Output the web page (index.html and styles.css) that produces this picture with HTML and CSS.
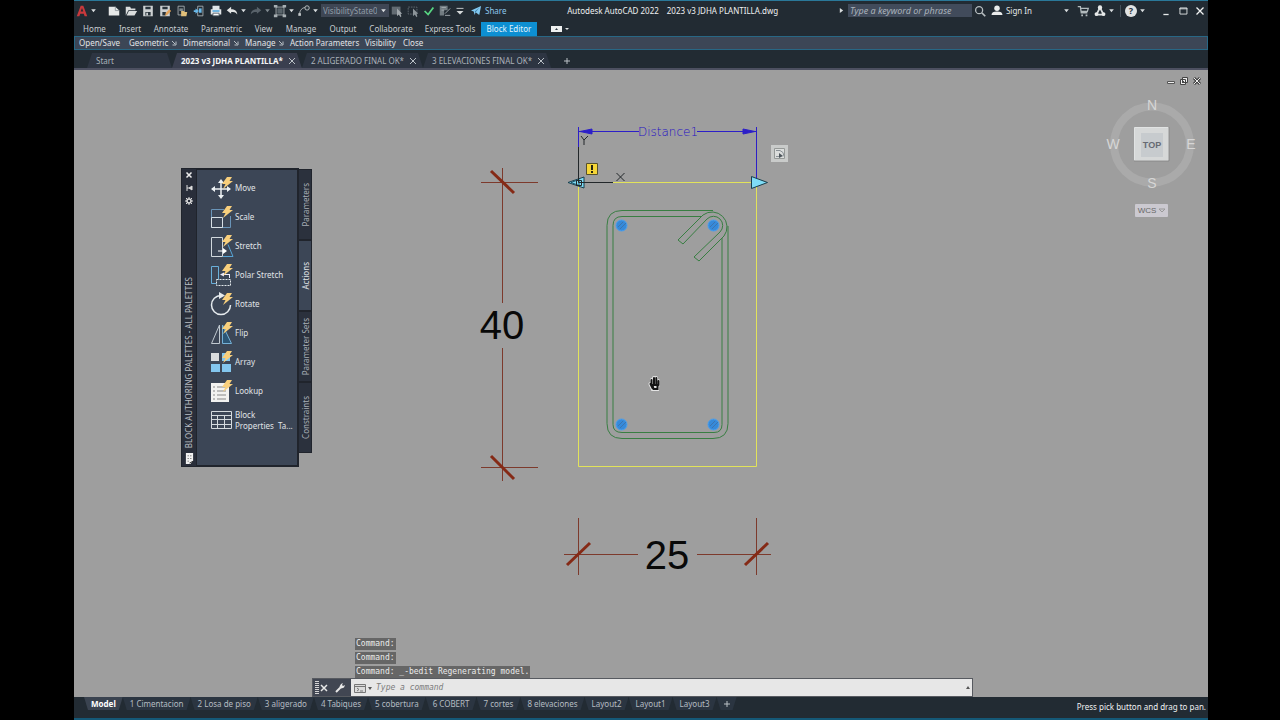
FILE: index.html
```html
<!DOCTYPE html>
<html lang="en">
<head>
<meta charset="utf-8">
<title>Autodesk AutoCAD 2022</title>
<link rel="stylesheet" href="styles.css">
</head>
<body>
<svg class="defs" width="0" height="0" aria-hidden="true">
  <symbol id="caret" viewBox="0 0 6 6"><path d="M1 2h4L3 4.500z" fill="currentColor"/></symbol>
  <symbol id="bolt" viewBox="0 0 12 12"><path d="M6 0h5L8.500 4H12L2 12l2.500-5H1z" fill="#f8cf7c"/></symbol>
  <symbol id="launch" viewBox="0 0 6 6"><path d="M1 1l3 3M5 1.500V5H1.500" fill="none" stroke="currentColor"/></symbol>
</svg>
<div class="app">
  <header class="titlebar">
    <div class="quick">
      <button class="tool" aria-label="Application menu"><svg viewBox="0 0 16 16"><path d="M2 14L6.500 2h3l4.500 12h-3l-1-3H6l-1 3zM6.500 8.500h3L8 4.500z" fill="#c9393c"/></svg></button>
      <svg class="caret after-logo"><use href="#caret"/></svg>
      <div class="file-tools">
        <button class="tool" aria-label="New"><svg viewBox="0 0 16 16"><path d="M2 3h7.500L14 7.500V13H2z" fill="#e6e8e8"/><path d="M9.500 3v4.500H14" fill="none" stroke="#8d959a"/></svg></button>
        <button class="tool" aria-label="Open"><svg viewBox="0 0 16 16"><path d="M2 13V3h5l1 2h5v2H5zM5.500 8H15l-3 5H3z" fill="#d9dcdd"/></svg></button>
        <button class="tool" aria-label="Save"><svg viewBox="0 0 16 16"><path d="M2.500 2h11v12h-11z" fill="#ccd0d2"/><path d="M5 3h6v3H5zM5 9h6v4H5z" fill="#29343c"/><path d="M6 10h2v3H6z" fill="#ccd0d2"/></svg></button>
        <button class="tool" aria-label="Save As"><svg viewBox="0 0 16 16"><path d="M2.500 2h11v12h-11z" fill="#ccd0d2"/><path d="M5 3h6v3H5zM5 9h4v4H5z" fill="#29343c"/><path d="M8 14l1-4 4-4 2 2-4 4z" fill="#e3a359"/></svg></button>
        <button class="tool" aria-label="Open from Web"><svg viewBox="0 0 16 16"><path d="M3.500 2.500h7v10h-7z" fill="none" stroke="#a8afb2"/><path d="M5 5h4v3H5z" fill="#7d888e"/><path d="M7 8h3l1 1h3l-1 5H7z" fill="#e0bf79"/></svg></button>
        <button class="tool" aria-label="Save to Web"><svg viewBox="0 0 16 16"><path d="M6.500 2.500h6v11h-6z" fill="none" stroke="#a8afb2"/><path d="M4 5l4 3-4 3V9H2V7h2z" fill="#69b9ea"/><path d="M8 5h3v5H8z" fill="#69b9ea"/></svg></button>
        <button class="tool" aria-label="Plot"><svg viewBox="0 0 16 16"><path d="M4 2h8v4H4zM2 6h12v6H2z" fill="#e1e5e7"/><path d="M4 7h8v2H4z" fill="#60afe0"/><path d="M4.500 10.500h7v3h-7z" fill="#fff" stroke="#56616a"/></svg></button>
      </div>
      <button class="tool" aria-label="Undo"><svg viewBox="0 0 16 16"><path d="M2 7l5-4v3c4 0 7 2 7 6-2-3-4-3-7-3v2z" fill="#e2e4e4"/></svg></button>
      <svg class="caret"><use href="#caret"/></svg>
      <button class="tool" aria-label="Redo"><svg viewBox="0 0 16 16"><path d="M14 7L9 3v3c-4 0-7 2-7 6 2-3 4-3 7-3v2z" fill="#58626a"/></svg></button>
      <svg class="caret dim"><use href="#caret"/></svg>
      <button class="tool" aria-label="Group"><svg viewBox="0 0 16 16"><path d="M3.500 3.500h9v9h-9z" fill="none" stroke="#aeb5b8"/><path d="M5 5h6v6H5z" fill="#59646b"/><path d="M1 1h4v3H1zM11 1h4v3h-4zM1 12h4v3H1zM11 12h4v3h-4z" fill="#a7afb3"/></svg></button>
      <svg class="caret"><use href="#caret"/></svg>
      <button class="tool" aria-label="Block action"><svg viewBox="0 0 16 16"><path d="M3 12c0-5 3-8 7-8" fill="none" stroke="#c5cacc"/><circle cx="11.500" cy="4.500" r="2.500" fill="#29343c" stroke="#c5cacc"/><path d="M1.500 10.500h3v3h-3z" fill="#c5cacc"/></svg></button>
      <svg class="caret"><use href="#caret"/></svg>
      <div class="state"><select aria-label="Visibility state"><option>VisibilityState0</option></select><svg class="caret"><use href="#caret"/></svg></div>
      <button class="tool" aria-label="Make visible"><svg viewBox="0 0 16 16"><path d="M2 3h10v9H2z" fill="#626b72"/><path d="M8 5v9l2-2 2 3 1-1-1-3h2z" fill="#a1a8ac"/></svg></button>
      <button class="tool" aria-label="Make invisible"><svg viewBox="0 0 16 16"><path d="M2.500 3.500h10v8h-10z" fill="none" stroke="#626b72" stroke-dasharray="2 1"/><path d="M8 5v9l2-2 2 3 1-1-1-3h2z" fill="#8c959a"/></svg></button>
      <button class="tool" aria-label="Test block"><svg viewBox="0 0 16 16"><path d="M3 8l4 4 6-8" fill="none" stroke="#58d783" stroke-width="2"/></svg></button>
      <button class="tool" aria-label="Edit attributes"><svg viewBox="0 0 16 16"><path d="M2 2h9v5H7v6H2z" fill="#727c82"/><path d="M4 4h5M4 7h3M8 13h6M8 11l6-6" stroke="#a5adb1"/></svg></button>
      <button class="tool more" aria-label="Customize"><svg viewBox="0 0 16 16"><path d="M4 5h8" stroke="#d5d9da"/><path d="M4 8h8l-4 4z" fill="#d5d9da"/></svg></button>
      <button class="share"><svg viewBox="0 0 12 12"><path d="M0 6L11 1 9 11 5 8 4 11 3 7z" fill="#82c8f0"/><path d="M4 7l5-4-4 5" fill="#397da8"/></svg>Share</button>
    </div>
    <h1 class="doc-title"><span>Autodesk AutoCAD 2022</span><span>2023 v3 JDHA PLANTILLA.dwg</span></h1>
    <div class="account">
      <svg class="play" viewBox="0 0 6 6"><path d="M1 0l4 3-4 3z" fill="#d9ddde"/></svg>
      <input class="search" type="text" placeholder="Type a keyword or phrase" aria-label="Search">
      <button class="tool" aria-label="Find"><svg viewBox="0 0 16 16"><circle cx="7" cy="7" r="4" fill="none" stroke="#b6bdc0" stroke-width="1.500"/><path d="M10 10l4 4" stroke="#b6bdc0" stroke-width="2"/></svg></button>
      <button class="signin"><svg viewBox="0 0 12 12"><circle cx="6" cy="3.500" r="3" fill="#e9ebeb"/><path d="M0 11c0-3 2-4 6-4s6 1 6 4z" fill="#e9ebeb"/></svg>Sign In</button>
      <svg class="caret signin-caret"><use href="#caret"/></svg>
      <button class="tool" aria-label="Store"><svg viewBox="0 0 16 16"><path d="M2 3h3l1 7h7M5.500 5H14l-1 3.500H6" fill="none" stroke="#b2babd" stroke-width="1.500"/><path d="M6 12h2v2H6zM11 12h2v2h-2z" fill="#b2babd"/></svg></button>
      <button class="tool" aria-label="App store"><svg viewBox="0 0 16 16"><path d="M8 4L4 12h8z" fill="none" stroke="#d9ddde" stroke-width="2"/><circle cx="8" cy="4" r="2.500" fill="#e7e9e9"/><circle cx="4" cy="11.500" r="2.200" fill="#e7e9e9"/><circle cx="12" cy="11.500" r="2.200" fill="#e7e9e9"/></svg></button>
      <svg class="caret"><use href="#caret"/></svg>
      <i class="rule"></i>
      <button class="help" aria-label="Help">?</button>
      <svg class="caret"><use href="#caret"/></svg>
      <div class="window-buttons">
        <button class="tool" aria-label="Minimize"><svg viewBox="0 0 16 16"><path d="M5 12h6" stroke="#e6e9e9" stroke-width="1.500"/></svg></button>
        <button class="tool" aria-label="Maximize"><svg viewBox="0 0 16 16"><path d="M4.500 4.500h8v7h-8zM4 5.500h9" fill="none" stroke="#e6e9e9"/></svg></button>
        <button class="tool" aria-label="Close"><svg viewBox="0 0 16 16"><path d="M4 4l8 8M12 4l-8 8" stroke="#f2f4f4" stroke-width="1.500"/></svg></button>
      </div>
    </div>
  </header>

  <nav class="ribbon-tabs" aria-label="Ribbon">
    <button>Home</button><button>Insert</button><button>Annotate</button><button>Parametric</button><button>View</button><button>Manage</button><button>Output</button><button>Collaborate</button><button>Express Tools</button><button class="active">Block Editor</button>
    <button class="ribbon-mode" aria-label="Minimize ribbon"><svg viewBox="0 0 18 8"><path d="M0 1h11v6H0z" fill="#eef0f0"/><path d="M4 5h3L5.500 3z" fill="#303b43"/><path d="M14 3h4l-2 2z" fill="#e0e3e4"/></svg></button>
  </nav>

  <div class="panels">
    <button>Open/Save</button>
    <button>Geometric<svg><use href="#launch"/></svg></button>
    <button>Dimensional<svg><use href="#launch"/></svg></button>
    <button>Manage<svg><use href="#launch"/></svg></button>
    <button>Action Parameters</button>
    <button>Visibility</button>
    <button>Close</button>
  </div>

  <nav class="file-tabs" aria-label="Drawings">
    <div class="file start"><button>Start</button></div>
    <div class="file active"><button>2023 v3 JDHA PLANTILLA*</button><button class="x" aria-label="Close drawing"><svg viewBox="0 0 6 6"><path d="M0 0l6 6M6 0L0 6"/></svg></button></div>
    <div class="file"><button>2 ALIGERADO FINAL OK*</button><button class="x" aria-label="Close drawing"><svg viewBox="0 0 6 6"><path d="M0 0l6 6M6 0L0 6"/></svg></button></div>
    <div class="file"><button>3 ELEVACIONES FINAL OK*</button><button class="x" aria-label="Close drawing"><svg viewBox="0 0 6 6"><path d="M0 0l6 6M6 0L0 6"/></svg></button></div>
    <button class="add" aria-label="New drawing"><svg viewBox="0 0 6 6"><path d="M3 0v6M0 3h6"/></svg></button>
  </nav>

  <main class="canvas">
    <svg class="drawing" viewBox="74 70 1134 627" role="img" aria-label="Beam section, 25 by 40">
      <g fill="none" stroke="#7d3a2c">
        <path d="M502.500 168v135M502.500 348v133M481 182.500h57M481 467.500h57M578.500 518v57M756.500 518v57M564 554.500h74M697 554.500h74"/>
        <path d="M491 171l23 22M491 456l23 23M567 565l23-22M745 565l23-22" stroke="#852a16" stroke-width="3"/>
      </g>
      <g class="dimension" text-anchor="middle"><text x="502" y="339">40</text><text x="667" y="569">25</text></g>
      <path d="M578.500 182.500h178v284h-178z" fill="none" stroke="#e2e35a"/>
      <g stroke="#2c1fc8" fill="none">
        <path d="M578.500 127v20M756.500 127v55M579 131.500h60M697 131.500h59"/>
        <path d="M580 131.500l12-2.500v5zM755 131.500l-12-2.500v5z" fill="#2c1fc8"/>
      </g>
      <text class="parameter" x="668" y="136" text-anchor="middle">Distance1</text>
      <g fill="none" stroke="#387e42">
        <path d="M713 210.500h-91q-15 0-15 15v198q0 15 15 15h91q15 0 15-15V226"/>
        <path d="M701 216.500h-79q-9 0-9 9v199q0 8 9 8h92q8 0 8-8V238"/>
        <path d="M678 240L703 215A15 15 0 0 1 724 236L699 261L694 257L720 232A9 9 0 0 0 707 219L683 244z"/>
      </g>
      <g fill="#368ada" stroke="#4aa0ef">
        <circle cx="621.500" cy="225.500" r="5.500"/><circle cx="713.500" cy="225.500" r="5.500"/><circle cx="621.500" cy="424.500" r="5.500"/><circle cx="713.500" cy="424.500" r="5.500"/>
        <path d="M618 227l5-5M620 229l6-6M710 227l5-5M712 229l6-6M618 426l5-5M620 428l6-6M710 426l5-5M712 428l6-6" stroke="#3c75b0"/>
      </g>
      <path d="M568 182.500l16-5.500v11zM751.500 176.500v12l16-6z" fill="#7fdcf6" stroke="#173e4c"/>
      <path d="M571 182.500l8-3v6z" fill="#7fdcf6" stroke="#1d5367"/>
      <path d="M578.500 147v35.500H613M576.500 180.500h5v5h-5zM581 136l3 4 4-4M584 140v5M616.500 173l8 8M624.500 173l-8 8" fill="none" stroke="#22272a"/>
      <path d="M586.500 163.500h11v11h-11z" fill="#f6d638" stroke="#56502a"/><path d="M592 165v5M592 171v2" stroke="#252510" stroke-width="2"/>
      <g><path d="M771 145h17v17h-17z" fill="#c9cbca"/><path d="M774.500 148.500h10v10h-10z" fill="#dcdedd" stroke="#959997"/><path d="M776 156.500h5M776 150.500h4q4 1 4 6" fill="none" stroke="#8a9196"/><path d="M779 153l4 3-4 2z" fill="#4d565c"/></g>
      <g stroke-linecap="round" fill="none">
        <path d="M652 385v-5M654 384v-6M656 384v-6M658 385v-4M650.500 384l2 4M652.500 386h4.500v3h-4z" stroke="#e4e4e4" stroke-width="4"/>
        <path d="M651.500 385v-5M654 384v-6M656.300 384v-6M658.500 385v-4M650.500 384l2 4M652.500 385h5v4h-4z" stroke="#151515" stroke-width="2"/>
      </g>
      <g class="compass">
        <circle cx="1152" cy="144.500" r="38" fill="none" stroke="#aaa" stroke-width="8"/>
        <text x="1152" y="110">N</text><text x="1152" y="188">S</text><text x="1113" y="149">W</text><text x="1191" y="149">E</text>
        <path d="M1134.500 127.500h34v33h-34z" fill="#d6d8d8" stroke="#e1e3e3"/><path d="M1141 133h22v24h-22z" fill="#c7cbce"/>
        <path d="M1134 161h35v-34" fill="none" stroke="#888"/>
        <text class="top" x="1152" y="148">TOP</text>
        <rect x="1135" y="204" width="33" height="13" rx="1" fill="#cbc9d0"/>
        <text class="wcs" x="1147" y="213">WCS</text><path d="M1159 209h6l-3 3z" fill="none" stroke="#999"/>
      </g>
    </svg>

    <div class="view-buttons">
      <button aria-label="Minimize view"><svg viewBox="0 0 10 10"><path d="M1.500 5.500h7v2h-7z" fill="#eee" stroke="#555"/></svg></button>
      <button aria-label="Restore view"><svg viewBox="0 0 10 10"><path d="M3.500 1.500h5v5h-5zM1.500 3.500h5v5h-5z" fill="#eee" stroke="#444"/><path d="M3 5h2v2H3z" fill="#444"/></svg></button>
      <button aria-label="Close view"><svg viewBox="0 0 10 10"><path d="M2 2l6 6M8 2L2 8" stroke="#444" stroke-width="3"/><path d="M2 2l6 6M8 2L2 8" stroke="#eee"/></svg></button>
    </div>

    <aside class="palette">
      <div class="palette-bar">
        <button aria-label="Close palette"><svg viewBox="0 0 8 8"><path d="M1.500 1.500l5 5M6.500 1.500l-5 5" stroke="#eee" stroke-width="1.500"/></svg></button>
        <button aria-label="Auto-hide"><svg viewBox="0 0 8 8"><path d="M2 1v6M2 4h2M7 2L4 4l3 2z" stroke="#ddd" fill="#ddd"/></svg></button>
        <button aria-label="Properties"><svg viewBox="0 0 8 8"><circle cx="4" cy="4" r="2" fill="none" stroke="#ddd" stroke-width="1.500"/><path d="M1 1l1.500 1.500M7 1L5.500 2.500M1 7l1.500-1.500M7 7L5.500 5.500M4 0v2M4 6v2M0 4h2M6 4h2" stroke="#ddd"/></svg></button>
        <h2>BLOCK AUTHORING PALETTES - ALL PALETTES</h2>
        <svg class="sheet" viewBox="0 0 10 12"><path d="M1 0h8v8l-3 4H1z" fill="#f1f1f1"/><path d="M3 3h1M6 3h1M3 6h1M6 6h1M3 9h1M5 11l4-2" stroke="#333"/></svg>
      </div>
      <div class="actions">
        <button><svg viewBox="0 0 24 24"><path d="M12 5v16M3 13h18" stroke="#eef2f4" stroke-width="1.500"/><path d="M12 3l3 4H9zM12 23l3-4H9zM2 13l4-3v6zM22 13l-4-3v6z" fill="#eef2f4"/><use href="#bolt" x="12" y="1" width="12" height="12"/></svg>Move</button>
        <button><svg viewBox="0 0 24 24"><path d="M2.500 4.500H15M21.500 11v11.500h-19v-18" fill="none" stroke="#6994b8"/><path d="M2.500 12.500h11v10h-11z" fill="none" stroke="#d7dfe5"/><use href="#bolt" x="12" y="1" width="12" height="12"/></svg>Scale</button>
        <button><svg viewBox="0 0 24 24"><path d="M2.500 3.500h11v19h-11z" fill="none" stroke="#d1d8dd"/><path d="M14 22.500h10l-5-12" fill="none" stroke="#57a4d5"/><path d="M9 17h6" stroke="#fff"/><path d="M14 14l4 3-4 3z" fill="#fff"/><use href="#bolt" x="12" y="1" width="12" height="12"/></svg>Stretch</button>
        <button><svg viewBox="0 0 24 24"><path d="M2.500 3.500h7v17h-7z" fill="none" stroke="#69afd9"/><path d="M7.500 16.500h14v6h-14z" fill="#3e4a59" stroke="#e2e8ec" stroke-dasharray="2 1"/><path d="M12 11.500h8M20.500 11v4" stroke="#eef"/><path d="M11 11.500l4-2v4z" fill="#eef"/><use href="#bolt" x="12" y="1" width="12" height="12"/></svg>Polar Stretch</button>
        <button><svg viewBox="0 0 24 24"><path d="M12 3.500A9.500 9.500 0 1 0 21.500 13" fill="none" stroke="#e6ebee" stroke-width="1.500"/><path d="M10 0l6 3.500-6 3.500z" fill="#e6ebee"/><use href="#bolt" x="12" y="1" width="12" height="12"/></svg>Rotate</button>
        <button><svg viewBox="0 0 24 24"><path d="M10.500 4v18.500h-8z" fill="none" stroke="#c0c9d0"/><path d="M13.500 4v18.500h9z" fill="#2c5676" stroke="#75b1d7"/><use href="#bolt" x="12" y="1" width="12" height="12"/></svg>Flip</button>
        <button><svg viewBox="0 0 24 24"><path d="M2 3h8v8H2z" fill="#d9dcde"/><path d="M13 3h8v8h-8zM2 14h9v8H2zM13 14h9v8h-9z" fill="#83c6ee"/><use href="#bolt" x="12" y="1" width="12" height="12"/></svg>Array</button>
        <button><svg viewBox="0 0 24 24"><path d="M2 4h18v19H2z" fill="#f2f2f0"/><path d="M4 8h2M8 8h9M4 12h2M8 12h9M4 16h2M8 16h9M4 20h2M8 20h9" stroke="#888"/><use href="#bolt" x="12" y="1" width="12" height="12"/></svg>Lookup</button>
        <button><svg viewBox="0 0 24 24"><path d="M2.500 3.500h20v17h-20zM2 7.500h21M2 11.500h21M2 16.500h21M8.500 7v14M15.500 7v14" fill="none" stroke="#d4dade"/></svg><span>Block<br>Properties&nbsp; Ta...</span></button>
      </div>
      <div class="palette-tabs">
        <button><span>Parameters</span></button>
        <button class="active"><span>Actions</span></button>
        <button><span>Parameter Sets</span></button>
        <button><span>Constraints</span></button>
      </div>
    </aside>

    <section class="command">
      <div class="history"><p>Command:</p><p>Command:</p><p>Command: _-bedit Regenerating model.</p></div>
      <div class="command-line">
        <div class="command-tools">
          <i class="grip"></i>
          <button aria-label="Close command line"><svg viewBox="0 0 10 10"><path d="M2 2l6 6M8 2L2 8" stroke="#e8e8e8" stroke-width="1.500"/></svg></button>
          <button class="wrench" aria-label="Customize"><svg viewBox="0 0 10 10"><path d="M1 9l5-5" stroke="#e8e8e8" stroke-width="2"/><path d="M4.500 3.500L6 1l2-1-1 2 1 1 2-1-1 2.500-2.500 1z" fill="#e8e8e8"/></svg></button>
        </div>
        <svg class="prompt" viewBox="0 0 18 10"><path d="M.5 1.500h11v8H.5zM.5 3.500h11M3 5l2 1.500L3 8M6 8h3" fill="#dcdcdc" stroke="#777"/><path d="M14 4h4l-2 3z" fill="#555"/></svg>
        <input type="text" placeholder="Type a command" aria-label="Command">
        <button class="recent" aria-label="Expand history"><svg viewBox="0 0 6 6"><path d="M1 4h4L3 1z" fill="#555"/></svg></button>
      </div>
    </section>
  </main>

  <footer class="bottom">
    <nav class="layouts" aria-label="Layouts">
      <button class="active">Model</button><button>1 Cimentacion</button><button>2 Losa de piso</button><button>3 aligerado</button><button>4 Tabiques</button><button>5 cobertura</button><button>6 COBERT</button><button>7 cortes</button><button>8 elevaciones</button><button>Layout2</button><button>Layout1</button><button>Layout3</button><button aria-label="New layout"><svg viewBox="0 0 6 6"><path d="M3 0v6M0 3h6"/></svg></button>
    </nav>
    <p class="hint">Press pick button and drag to pan.</p>
  </footer>
</div>
</body>
</html>
```
FILE: styles.css
```css
* { box-sizing: border-box; }
body { margin: 0; background: #000; color: #c9ced2; font: 8px/12px "Noto Sans", "Open Sans", sans-serif; }
button, input, select { font: inherit; color: inherit; border: 0; padding: 0; background: none; border-radius: 0; }
button { white-space: nowrap; cursor: pointer; }
h1, h2, p { margin: 0; font: inherit; }
svg { display: block; }
.defs { position: absolute; }
.app { display: flex; flex-direction: column; height: 100vh; margin: 0 72px 0 74px; background: #222b33; }

.titlebar { display: flex; align-items: center; height: 22px; padding-bottom: 2px; border-top: 1px solid #2a7899; flex: none; }
.quick, .file-tools, .account, .window-buttons { display: flex; align-items: center; }
.tool { width: 16px; height: 16px; flex: none; display: grid; place-items: center; }
.file-tools .tool, .account .tool { width: 17px; }
.tool svg { width: 14px; height: 14px; }
.caret { width: 7px; height: 7px; flex: none; margin: 0 1px 0 0; color: #d9dddf; }
.dim { color: #818b91; }
.after-logo { margin-right: 8px; }
.state { display: flex; align-items: center; width: 68px; height: 13px; margin-left: 1px; background: #3e4654; color: #909ba6; }
.state select { appearance: none; width: 56px; height: 13px; overflow: hidden; padding-left: 2px; margin-right: 3px; }
.quick .more { width: 13px; }
.share { display: flex; align-items: center; gap: 3px; margin-left: 5px; color: #8fc9ee; }
.share svg { width: 11px; height: 11px; }
.doc-title { display: flex; gap: 8px; margin: 0 auto; color: #eef0f1; white-space: nowrap; }
.play { width: 5px; height: 5px; margin-right: 4px; }
.search { width: 124px; height: 13px; padding: 0 2px; background: #414b5b; font-style: italic; font-size: 9px; color: #b8c0c6; }
.search::placeholder { color: #aab2ba; opacity: 1; }
.signin { display: flex; align-items: center; gap: 3px; margin-left: 2px; color: #e5e8e9; }
.signin svg { width: 12px; height: 11px; }
.signin-caret { margin: 0 4px 0 31px; }
.account .rule { width: 1px; height: 12px; background: #46525b; margin: 0 4px; }
.help { width: 12px; height: 12px; border-radius: 50%; background: #e1e3e3; color: #27323b; font-weight: 700; font-size: 9px; }
.help + .caret { margin-left: 2px; }
.window-buttons { margin-left: 10px; }

.ribbon-tabs { display: grid; grid-template-columns: 37px 34px 48px 53px 31px 44px 40px 56px 62px 56px 46px; padding-left: 2px; height: 14px; flex: none; }
.ribbon-tabs .active { background: #0d8fd2; color: #e2f3fd; }
.ribbon-mode { display: grid; place-items: center; }
.ribbon-mode svg { width: 18px; height: 8px; }
.panels { display: grid; grid-template-columns: 50px 54px 62px 45px 75px 38px 30px; height: 14px; padding-left: 4px; flex: none; background: #3c4656; border: 1px solid #286785; color: #e1e4e6; }
.panels button { display: flex; align-items: center; justify-content: space-between; padding-right: 6px; }
.panels svg { width: 6px; height: 6px; color: #b8c0c6; }

.file-tabs { display: flex; height: 20px; flex: none; padding: 3px 0 0 13px; border-bottom: 2px solid #4d5061; }
.file { display: flex; align-items: center; gap: 6px; padding: 0 7px 0 9px; background: #2d3542; color: #abb2b9; clip-path: polygon(5px 0, calc(100% - 5px) 0, 100% 100%, 0 100%); }
.file.start { width: 85px; }
.file.active { background: #3a3f4f; color: #f4f5f6; font-weight: 700; }
.x svg, .add svg, .layouts svg { width: 6px; height: 6px; fill: none; stroke: #bac1c6; }
.add { padding: 0 13px; }

.canvas { position: relative; flex: 1; min-height: 0; background: #9e9e9e; overflow: hidden; }
.drawing { width: 100%; height: 100%; }
.dimension { font: 40px "Liberation Sans", Arial, sans-serif; fill: #090909; }
.parameter { font: 300 12px "DejaVu Sans Light", "DejaVu Sans", sans-serif; fill: #1f10c4; }
.compass text { font: 14px "Liberation Sans", Arial, sans-serif; fill: #d6d6d6; text-anchor: middle; }
.compass .top { font-size: 9px; font-weight: 700; fill: #666a73; }
.compass .wcs { font-size: 8px; fill: #666; }
.view-buttons { position: absolute; top: 6px; right: 6px; display: flex; gap: 3px; }
.view-buttons svg { width: 10px; height: 10px; }

.palette { position: absolute; left: 107px; top: 98px; display: flex; height: 299px; color: #e0e4e7; }
.palette-bar { width: 16px; display: flex; flex-direction: column; align-items: center; gap: 5px; padding: 2px 0; background: #292e3a; border: 1px solid #20242c; }
.palette-bar svg { width: 8px; height: 8px; }
.palette-bar h2 { writing-mode: vertical-rl; transform: rotate(180deg); margin-top: auto; line-height: 12px; color: #b9bec4; white-space: nowrap; }
.palette-bar .sheet { width: 9px; height: 11px; }
.actions { width: 102px; padding: 3px 0 0 12px; background: #3c4656; border: solid #20242c; border-width: 2px 2px 2px 0; }
.actions button { display: flex; align-items: center; gap: 2px; height: 29px; text-align: left; line-height: 11px; }
.actions svg { width: 24px; height: 24px; flex: none; overflow: visible; }
.palette-tabs { display: flex; flex-direction: column; width: 13px; height: 284px; margin-top: 1px; }
.palette-tabs button { flex: 1; background: #2b313d; border: 1px solid #20242c; border-left: 0; display: grid; place-items: center; color: #a7adb5; }
.palette-tabs .active { background: #3c4656; color: #e0e4e7; }
.palette-tabs span { writing-mode: vertical-rl; transform: rotate(180deg); line-height: 11px; }

.command { position: absolute; left: 238px; right: 235px; bottom: 0; font: 8px/12px "DejaVu Sans Mono", monospace; }
.history { display: flex; flex-direction: column; align-items: flex-start; gap: 2px; margin-left: 43px; }
.history p { padding: 0 1px; background: #666; color: #ebebeb; white-space: pre; }
.command-line { display: flex; align-items: center; height: 19px; background: #e7e7e7; border: 1px solid #575a60; }
.command-tools { display: flex; align-items: center; align-self: stretch; width: 38px; padding-left: 2px; background: #414652; }
.command-tools svg { width: 10px; height: 10px; }
.wrench { margin-left: 6px; }
.grip { width: 4px; height: 13px; background: repeating-linear-gradient(#d4d4d4 0 1px, #414652 1px 2px); }
.prompt { width: 18px; height: 10px; margin: 0 4px 0 3px; }
.command-line input { flex: 1; min-width: 0; font-style: italic; color: #777; }
.command-line input::placeholder { color: #7c7c7c; opacity: 1; }
.recent svg { width: 6px; height: 6px; margin-right: 1px; }

.bottom { display: flex; justify-content: space-between; flex: none; height: 23px; border-bottom: 2px solid #145877; }
.layouts { display: flex; height: 13px; padding-left: 10px; }
.layouts button { padding: 0 7px; background: #2b3541; color: #b5bcc2; clip-path: polygon(0 0, 100% 0, calc(100% - 4px) 100%, 4px 100%); }
.layouts .active { background: #3a4350; color: #fff; font-weight: 700; }
.hint { padding: 4px 2px 0 0; color: #eef0f1; white-space: nowrap; }
```
